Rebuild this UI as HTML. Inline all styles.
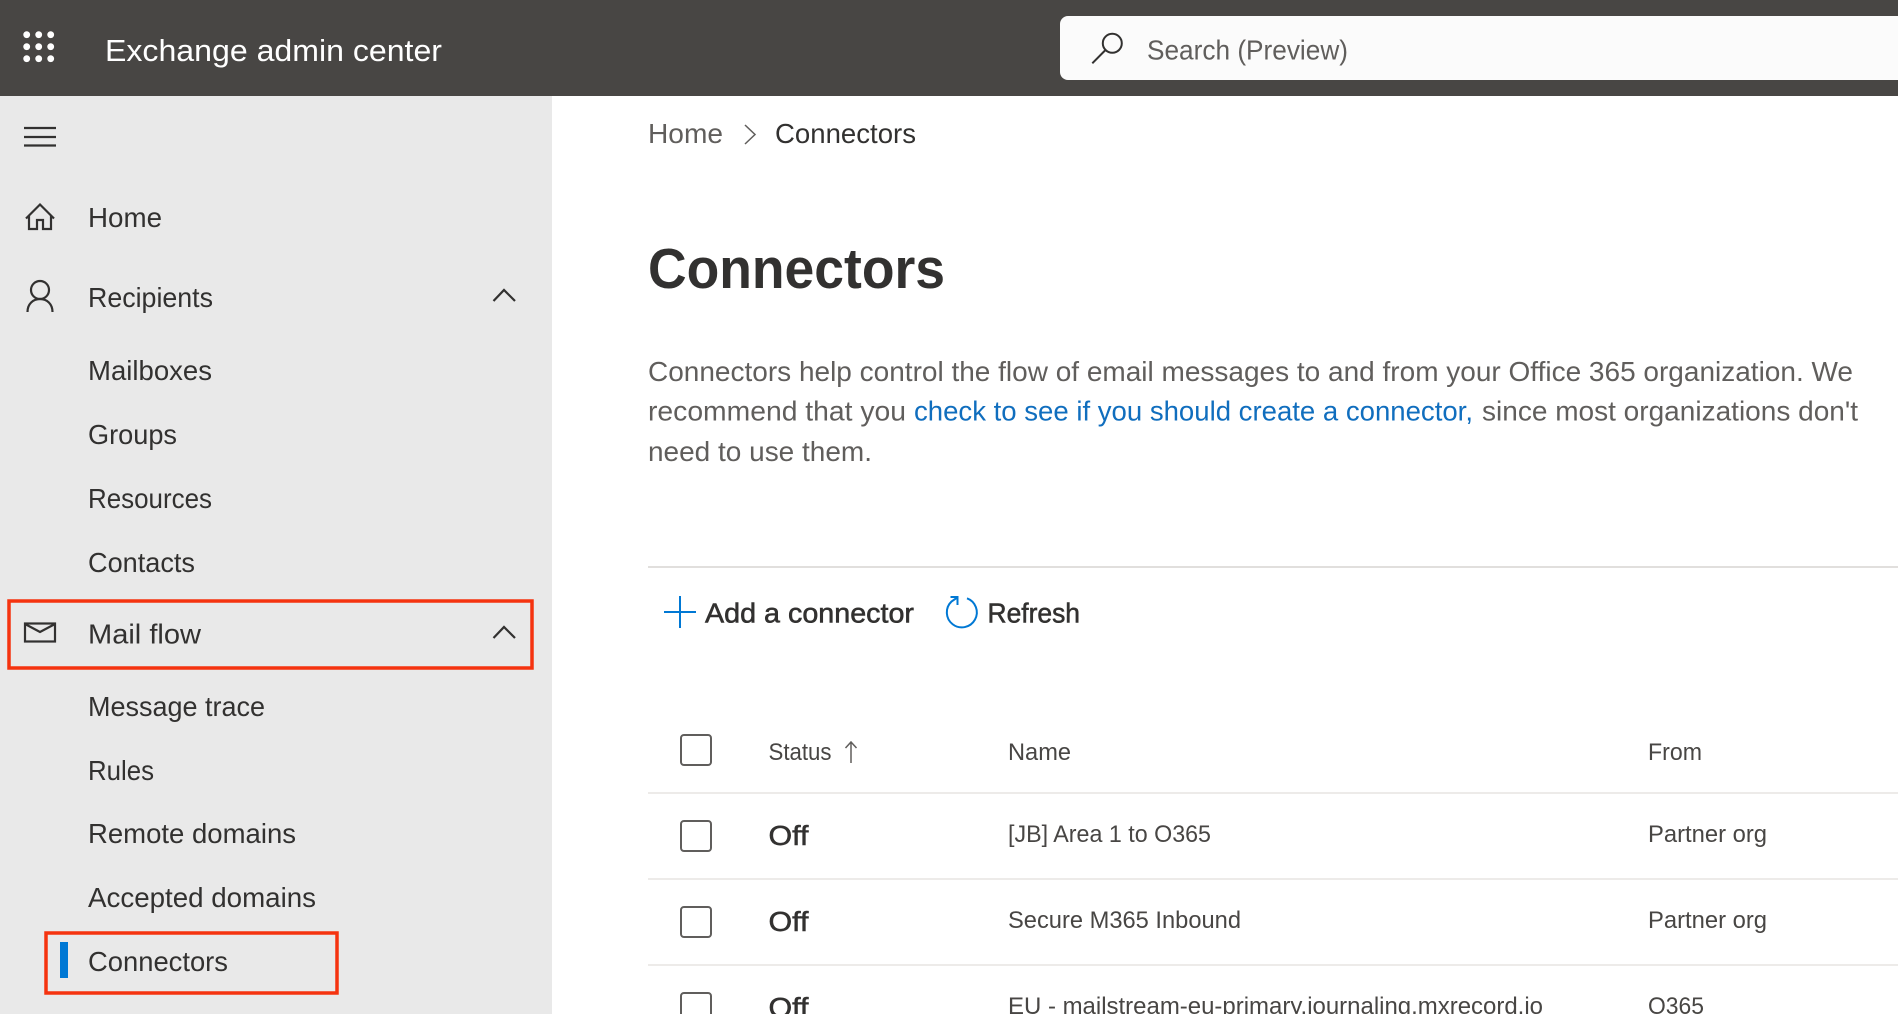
<!DOCTYPE html>
<html lang="en"><head><meta charset="utf-8"><title>Exchange admin center</title>
<style>
html,body{margin:0;padding:0;background:#fff;width:1898px;height:1014px;overflow:hidden}
svg{display:block}
text{font-family:"Liberation Sans",Arial,sans-serif;fill:#323130;font-size:27.5px}
.g{fill:#605e5c}
.s{stroke:#323130;stroke-width:.55px}
.th{font-size:24.5px;fill:#484644}
.td{font-size:24.5px;fill:#484644}
.ic{fill:none;stroke:#323130;stroke-width:2.2}
.cb{fill:#fff;stroke:#605e5c;stroke-width:2}
.ln{fill:#edebe9}
</style></head><body>
<svg width="1898" height="1014" viewBox="0 0 1898 1014" xmlns="http://www.w3.org/2000/svg">
<rect width="1898" height="1014" fill="#fff"/>
<rect width="1898" height="96" fill="#484644"/>
<rect y="96" width="552" height="918" fill="#e9e9e9"/>
<g fill="#fff"><circle cx="26.700" cy="34.700" r="3.400"/><circle cx="38.700" cy="34.700" r="3.400"/><circle cx="50.700" cy="34.700" r="3.400"/><circle cx="26.700" cy="46.700" r="3.400"/><circle cx="38.700" cy="46.700" r="3.400"/><circle cx="50.700" cy="46.700" r="3.400"/><circle cx="26.700" cy="58.700" r="3.400"/><circle cx="38.700" cy="58.700" r="3.400"/><circle cx="50.700" cy="58.700" r="3.400"/></g>
<text x="105" y="61" style="font-size:31px;fill:#fff" textLength="337" lengthAdjust="spacingAndGlyphs">Exchange admin center</text>
<path d="M1068 16H1898V80H1068a8 8 0 0 1-8-8V24a8 8 0 0 1 8-8z" fill="#fbfbfb"/>
<circle cx="1112.300" cy="43.300" r="9.500" fill="none" stroke="#323130" stroke-width="2"/><path d="M1105 50.500L1092.300 63.300" fill="none" stroke="#323130" stroke-width="2"/>
<text x="1147" y="59.500" class="g" textLength="201" lengthAdjust="spacingAndGlyphs">Search (Preview)</text>
<path d="M24 128H56M24 137H56M24 145.500H56" class="ic"/>
<path d="M26 218.500L40 204.500L54 218.500M29 215V229H37V220H43V229H51V215" class="ic"/>
<text x="88" y="227" textLength="74" lengthAdjust="spacingAndGlyphs">Home</text>
<circle cx="40" cy="290" r="9" class="ic"/><path d="M27.500 312C27.500 304 33 299 40 299C47 299 52.500 304 52.500 312" class="ic"/>
<text x="88" y="307" textLength="125" lengthAdjust="spacingAndGlyphs">Recipients</text>
<path d="M493.500 301L504 290L515 301" class="ic"/>
<text x="88" y="380" textLength="124" lengthAdjust="spacingAndGlyphs">Mailboxes</text>
<text x="88" y="444" textLength="89" lengthAdjust="spacingAndGlyphs">Groups</text>
<text x="88" y="508" textLength="124" lengthAdjust="spacingAndGlyphs">Resources</text>
<text x="88" y="572" textLength="107" lengthAdjust="spacingAndGlyphs">Contacts</text>
<rect x="9" y="601" width="523" height="67" fill="none" stroke="#f5330f" stroke-width="3.500"/>
<rect x="25" y="623.500" width="30" height="18" class="ic"/><path d="M25 624L40 632L55 624" class="ic"/>
<text x="88" y="643.500" textLength="113" lengthAdjust="spacingAndGlyphs">Mail flow</text>
<path d="M493.500 638L504 627L515 638" class="ic"/>
<text x="88" y="716" textLength="177" lengthAdjust="spacingAndGlyphs">Message trace</text>
<text x="88" y="780" textLength="66" lengthAdjust="spacingAndGlyphs">Rules</text>
<text x="88" y="843" textLength="208" lengthAdjust="spacingAndGlyphs">Remote domains</text>
<text x="88" y="907" textLength="228" lengthAdjust="spacingAndGlyphs">Accepted domains</text>
<rect x="46" y="933" width="291" height="60" fill="none" stroke="#f5330f" stroke-width="3.500"/>
<rect x="60" y="942" width="8" height="36" fill="#0078d4"/>
<text x="88" y="971" textLength="140" lengthAdjust="spacingAndGlyphs">Connectors</text>

<text x="648" y="143" class="g" textLength="75" lengthAdjust="spacingAndGlyphs">Home</text>
<path d="M745 125L755 134.500L745 144" fill="none" stroke="#605e5c" stroke-width="1.500"/>
<text x="775" y="143" textLength="141" lengthAdjust="spacingAndGlyphs">Connectors</text>
<text x="648" y="288" style="font-size:57px;font-weight:bold" textLength="297" lengthAdjust="spacingAndGlyphs">Connectors</text>
<text x="648" y="381" class="g" textLength="1205" lengthAdjust="spacingAndGlyphs">Connectors help control the flow of email messages to and from your Office 365 organization. We</text>
<text x="648" y="420.500" class="g" textLength="258" lengthAdjust="spacingAndGlyphs">recommend that you</text>
<text x="914" y="420.500" style="fill:#106ebe" textLength="559" lengthAdjust="spacingAndGlyphs">check to see if you should create a connector,</text>
<text x="1482" y="420.500" class="g" textLength="376" lengthAdjust="spacingAndGlyphs">since most organizations don't</text>
<text x="648" y="461" class="g" textLength="224" lengthAdjust="spacingAndGlyphs">need to use them.</text>
<rect x="648" y="566" width="1250" height="2" fill="#e1dfdd"/>

<path d="M664 612H696M680 596V628" fill="none" stroke="#0078d4" stroke-width="2"/>
<text x="705" y="622.500" class="s" textLength="209" lengthAdjust="spacingAndGlyphs">Add a connector</text>
<path d="M967 598.300A15 15 0 1 1 951.500 601.500L957.300 597.500" fill="none" stroke="#0078d4" stroke-width="2"/>
<path d="M950.500 597H957.500V605" fill="none" stroke="#0078d4" stroke-width="2"/>
<text x="987.500" y="622.500" class="s" textLength="92.500" lengthAdjust="spacingAndGlyphs">Refresh</text>

<rect x="681" y="735" width="30" height="30" rx="3" class="cb"/>
<text x="768.500" y="760" class="th" textLength="63" lengthAdjust="spacingAndGlyphs">Status</text>
<path d="M851 763V742M845.500 748L851 742L856.500 748" fill="none" stroke="#605e5c" stroke-width="1.500"/>
<text x="1008" y="760" class="th" textLength="63" lengthAdjust="spacingAndGlyphs">Name</text>
<text x="1648" y="760" class="th" textLength="54" lengthAdjust="spacingAndGlyphs">From</text>
<rect x="648" y="792" width="1250" height="2" class="ln"/>

<rect x="681" y="821" width="30" height="30" rx="3" class="cb"/>
<text x="768.500" y="845" class="s" textLength="40" lengthAdjust="spacingAndGlyphs">Off</text>
<text x="1008" y="842" class="td" textLength="203" lengthAdjust="spacingAndGlyphs">[JB] Area 1 to O365</text>
<text x="1648" y="842" class="td" textLength="119" lengthAdjust="spacingAndGlyphs">Partner org</text>
<rect x="648" y="878" width="1250" height="2" class="ln"/>

<rect x="681" y="907" width="30" height="30" rx="3" class="cb"/>
<text x="768.500" y="931" class="s" textLength="40" lengthAdjust="spacingAndGlyphs">Off</text>
<text x="1008" y="928" class="td" textLength="233" lengthAdjust="spacingAndGlyphs">Secure M365 Inbound</text>
<text x="1648" y="928" class="td" textLength="119" lengthAdjust="spacingAndGlyphs">Partner org</text>
<rect x="648" y="964" width="1250" height="2" class="ln"/>

<rect x="681" y="993" width="30" height="30" rx="3" class="cb"/>
<text x="768.500" y="1017" class="s" textLength="40" lengthAdjust="spacingAndGlyphs">Off</text>
<text x="1008" y="1014" class="td" textLength="535" lengthAdjust="spacingAndGlyphs">EU - mailstream-eu-primary.journaling.mxrecord.io</text>
<text x="1648" y="1014" class="td" textLength="56" lengthAdjust="spacingAndGlyphs">O365</text>
</svg>
</body></html>
